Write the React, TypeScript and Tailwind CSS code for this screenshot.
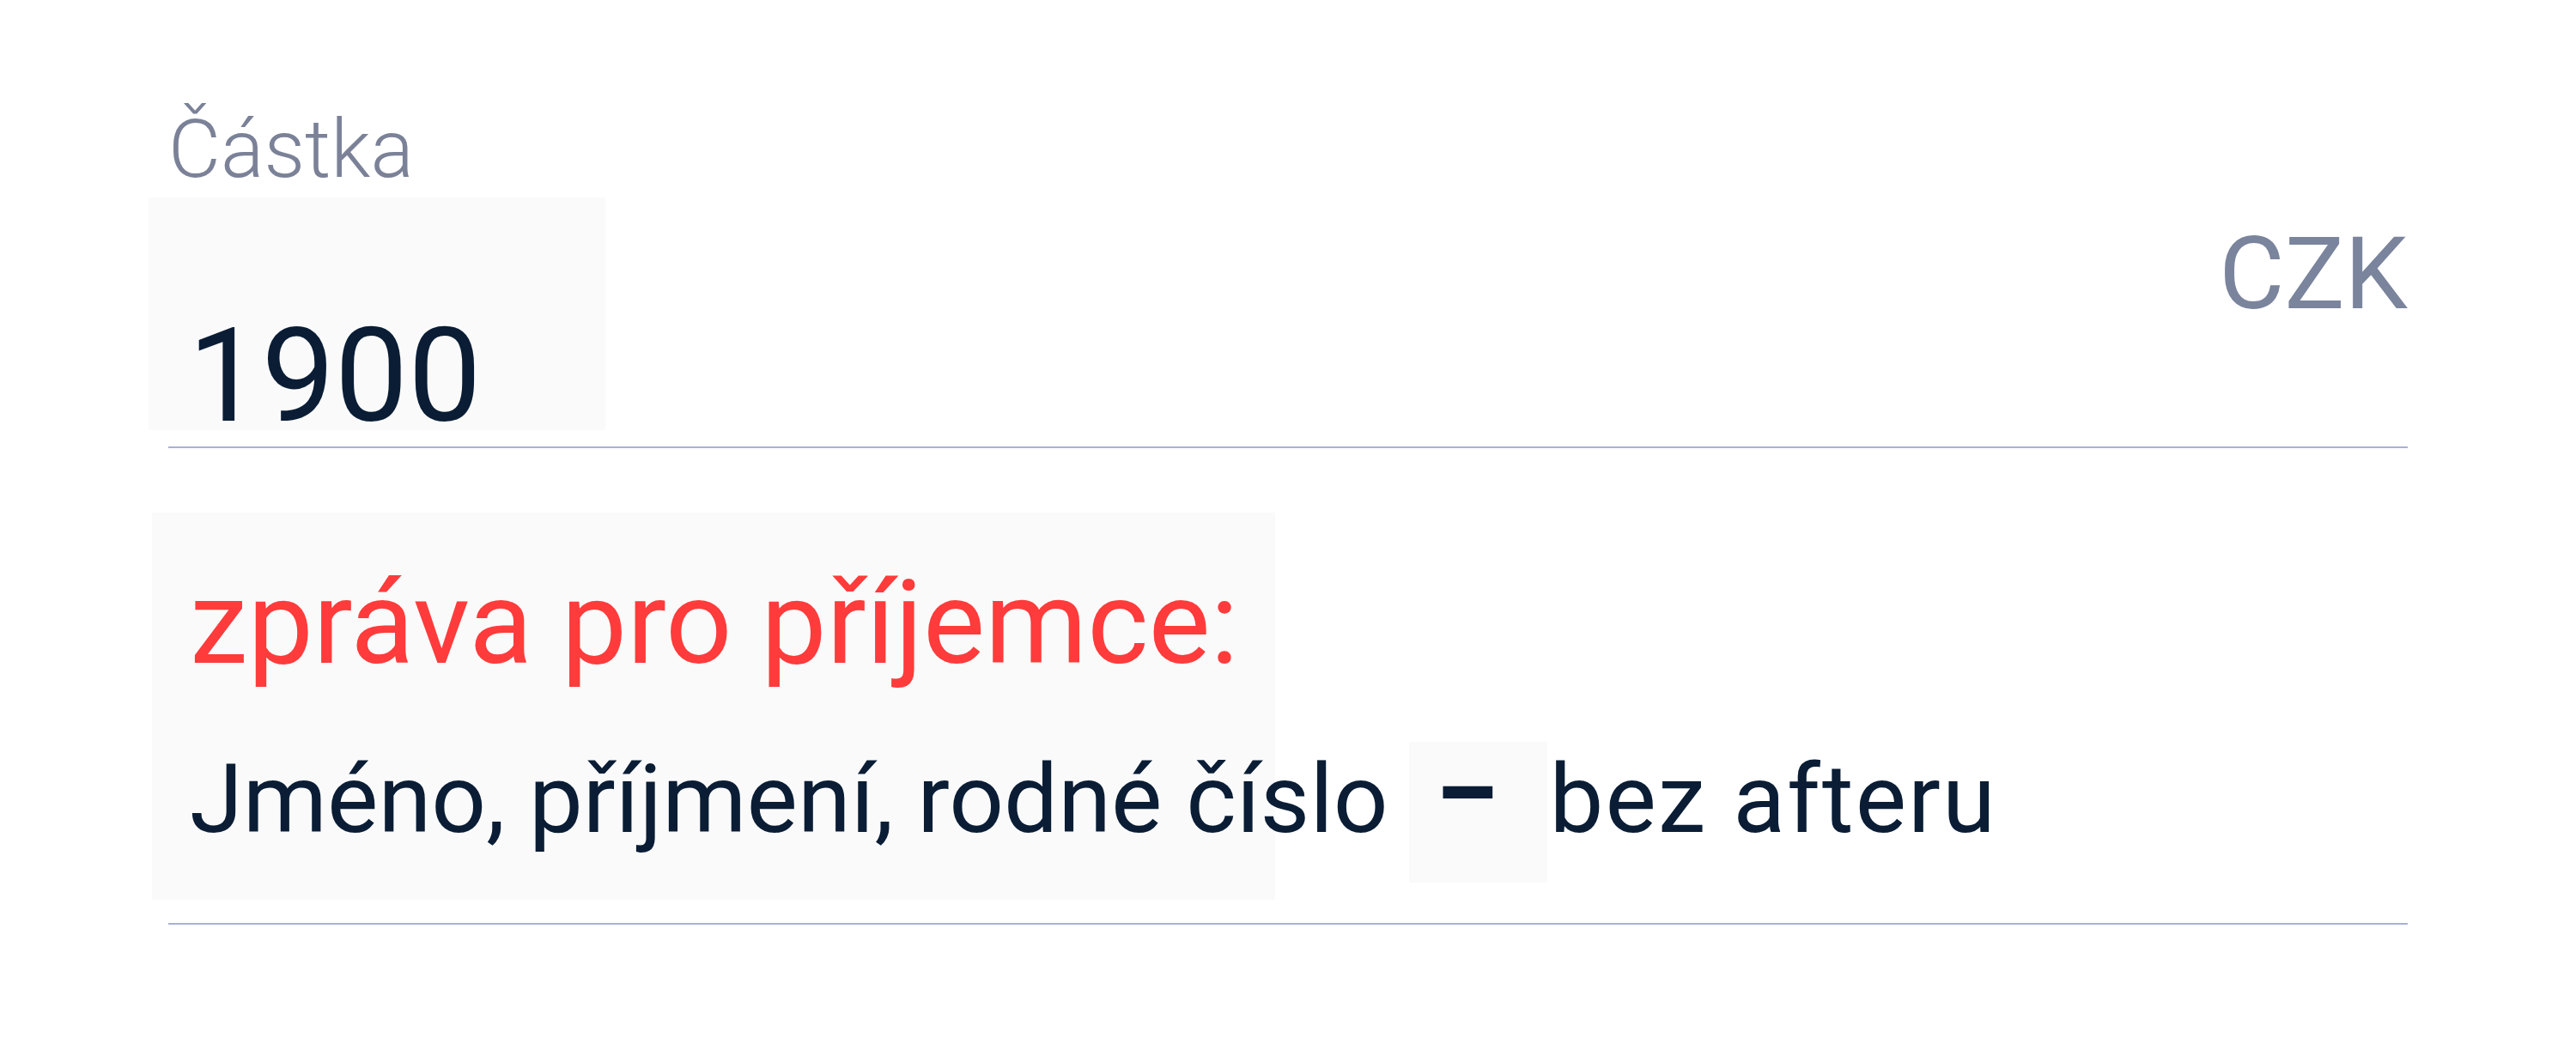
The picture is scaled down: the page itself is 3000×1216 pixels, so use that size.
export default function App() {
    return (
        <div className="w-[3000px] h-[1216px] bg-white px-[196px] font-['Roboto','Liberation_Sans',sans-serif] overflow-hidden">
            {/* Amount field */}
            <div className="pt-[127px]">
                <p className="text-[94px] leading-none font-light text-[#7b8298]">Částka</p>
            </div>
            <div className="mt-[9px] flex justify-between h-[290px]">
                <div className="ml-[-23px] w-[532px] h-[271px] bg-[#fafafa] pl-[46px] pt-[132px]">
                    <span className="block text-[152px] leading-none text-[#0a1d35]">1900</span>
                </div>
                <span className="mt-[31px] text-[117px] leading-none text-[#7a849c]">CZK</span>
            </div>
            <div className="h-[2px] bg-[#aab1d6]" />

            {/* Message for recipient */}
            <div className="mt-[75px] ml-[-19px] w-[1308px] h-[451px] bg-[#fafafa] pl-[44px] pt-[61px]">
                <p className="text-[136px] leading-none text-[#ff3b3b] whitespace-nowrap">zpráva pro příjemce:</p>
                <div className="mt-[81px] flex items-start whitespace-nowrap text-[112px] leading-none text-[#0a1d35]">
                    <span>Jméno, příjmení, rodné číslo</span>
                    <span className="ml-[24px] mt-[-11px] w-[161px] h-[164px] shrink-0 bg-[#fafafa] pl-[32px] pt-[3px] font-black">–</span>
                    <span className="ml-[3px] tracking-[2px]">bez afteru</span>
                </div>
            </div>
            <div className="mt-[27px] h-[2px] bg-[#aab1d6]" />
        </div>
    );
}
